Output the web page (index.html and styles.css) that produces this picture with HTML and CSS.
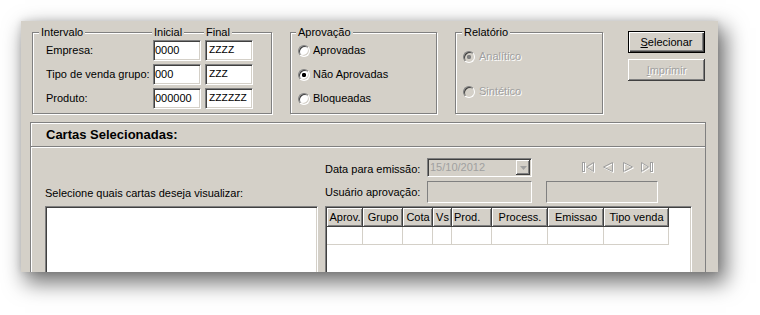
FILE: index.html
```html
<!DOCTYPE html>
<html lang="pt-BR">
<head>
<meta charset="utf-8">
<title>Cartas Selecionadas</title>
<link rel="stylesheet" href="styles.css">
</head>
<body>
<div class="stage">
<div class="frame">
<div class="win">
  <div class="top">
    <div class="group g-int">
      <div class="iv-grid">
        <span class="cap cap-int">Intervalo</span>
        <span class="cap cap-col">Inicial</span>
        <span class="cap cap-col">Final</span>

        <span class="rlabel">Empresa:</span>
        <span class="edit">0000</span>
        <span class="edit mono">ZZZZ</span>

        <span class="rlabel">Tipo de venda grupo:</span>
        <span class="edit">000</span>
        <span class="edit mono">ZZZ</span>

        <span class="rlabel">Produto:</span>
        <span class="edit">000000</span>
        <span class="edit mono">ZZZZZZ</span>
      </div>
    </div>

    <div class="group g-apr">
      <div class="gtitle"><span class="cap cap-apr">Aprovação</span></div>
      <div class="opts">
        <div class="opt"><span class="radio"></span>Aprovadas</div>
        <div class="opt"><span class="radio on"></span>Não Aprovadas</div>
        <div class="opt"><span class="radio"></span>Bloqueadas</div>
      </div>
    </div>

    <div class="group g-rel">
      <div class="gtitle"><span class="cap cap-rel">Relatório</span></div>
      <div class="opts opts-rel">
        <div class="opt dis"><span class="radio on"></span>Analítico</div>
        <div class="opt dis"><span class="radio"></span>Sintético</div>
      </div>
    </div>

    <div class="btns">
      <div class="btn btn-default"><span><u>S</u>elecionar</span></div>
      <div class="btn btn-dis"><span><u>I</u>mprimir</span></div>
    </div>
  </div>

  <div class="panel">
    <div class="panel-head">Cartas Selecionadas:</div>
    <div class="panel-body">
      <div class="col-left">
        <div class="lbl">Selecione quais cartas deseja visualizar:</div>
        <div class="listbox"></div>
      </div>
      <div class="col-right">
        <div class="frow frow1">
          <span class="flabel flabel1">Data para emissão:</span>
          <div class="combo">
            <span class="combo-text">15/10/2012</span>
            <span class="combo-btn">
              <svg width="7" height="4" viewBox="0 0 7 4"><polygon points="0,0 7,0 3.5,4" fill="#a0a0a0"/></svg>
            </span>
          </div>
          <svg class="nav" width="74" height="13" viewBox="0 0 74 13">
            <g fill="none" stroke="#ffffff" stroke-width="1" transform="translate(1,1)">
              <rect x="1.5" y="1.5" width="2" height="9"/>
              <polygon points="12.5,1.5 5.5,6 12.5,10.5"/>
              <polygon points="31.5,1.5 22.5,6 31.5,10.5"/>
              <polygon points="42.5,1.5 51.5,6 42.5,10.5"/>
              <polygon points="60.5,1.5 67.5,6 60.5,10.5"/>
              <rect x="69.5" y="1.5" width="2" height="9"/>
            </g>
            <g fill="none" stroke="#a0a0a0" stroke-width="1">
              <rect x="1.5" y="1.5" width="2" height="9"/>
              <polygon points="12.5,1.5 5.5,6 12.5,10.5"/>
              <polygon points="31.5,1.5 22.5,6 31.5,10.5"/>
              <polygon points="42.5,1.5 51.5,6 42.5,10.5"/>
              <polygon points="60.5,1.5 67.5,6 60.5,10.5"/>
              <rect x="69.5" y="1.5" width="2" height="9"/>
            </g>
          </svg>
        </div>
        <div class="frow frow2">
          <span class="flabel">Usuário aprovação:</span>
          <div class="field field-a"></div>
          <div class="field field-b"></div>
        </div>
        <div class="grid">
          <div class="grow ghead">
            <span class="hc">Aprov.</span>
            <span class="hc">Grupo</span>
            <span class="hc">Cota</span>
            <span class="hc">Vs</span>
            <span class="hc hc-left">Prod.</span>
            <span class="hc">Process.</span>
            <span class="hc">Emissao</span>
            <span class="hc">Tipo venda</span>
          </div>
          <div class="grow gdata">
            <span class="dc"></span><span class="dc"></span><span class="dc"></span><span class="dc"></span>
            <span class="dc"></span><span class="dc"></span><span class="dc"></span><span class="dc"></span>
          </div>
        </div>
      </div>
    </div>
  </div>
</div>
</div>
</div>
</body>
</html>
```

FILE: styles.css
```css
html, body {
  margin: 0;
  height: 100%;
  background: #ffffff;
}

body {
  font-family: "Liberation Sans", Arial, sans-serif;
  font-size: 11px;
  line-height: 13px;
  color: #000000;
}

.stage {
  box-sizing: border-box;
  width: 760px;
  height: 315px;
  padding: 21px 0 0 21px;
  background: #ffffff;
}

.frame {
  width: 697px;
  height: 251px;
  box-shadow: 6px 9px 20px 2px rgba(0, 0, 0, 0.55), 0 0 7px rgba(0, 0, 0, 0.12);
}

.win {
  width: 697px;
  height: 251px;
  background: #d4d0c8;
  overflow: hidden;
}

/* ---------- top area ---------- */
.top {
  display: flex;
  align-items: flex-start;
  padding: 10px 0 0 11px;
}

.group {
  box-sizing: border-box;
  height: 82px;
  margin-top: 1px;
  border: 1px solid #808080;
  box-shadow: inset 1px 1px 0 #ffffff, 1px 1px 0 #ffffff;
}

.g-int {
  width: 240px;
  padding-left: 13px;
}

.g-apr {
  width: 147px;
  margin-left: 18px;
  padding-left: 7px;
}

.g-rel {
  width: 148px;
  margin-left: 18px;
  padding-left: 7px;
}

.cap {
  background: #d4d0c8;
  padding: 0 2px;
  height: 13px;
  line-height: 13px;
  white-space: nowrap;
}

.iv-grid {
  display: grid;
  grid-template-columns: 103px 48px 48px;
  grid-template-rows: 11px 21px 21px 21px;
  column-gap: 4px;
  row-gap: 3px;
  margin-top: -7px;
}

.iv-grid .cap {
  justify-self: start;
  align-self: start;
}

.cap-int { margin-left: -7px; }
.cap-col { margin-left: -1px; }

.rlabel {
  align-self: center;
  white-space: nowrap;
}

.edit {
  box-sizing: border-box;
  height: 21px;
  display: flex;
  align-items: center;
  padding-left: 1px;
  background: #ffffff;
  border: 1px solid;
  border-color: #808080 #ffffff #ffffff #808080;
  box-shadow: inset 1px 1px 0 #404040, inset -1px -1px 0 #d4d0c8;
}

.edit.mono {
  font-family: "Liberation Mono", "Courier New", monospace;
  font-size: 10.5px;
  padding-left: 3px;
}

.gtitle {
  display: flex;
  height: 11px;
  margin-top: -7px;
  margin-bottom: 3px;
}

.cap-apr { margin-left: -2px; }
.cap-rel { margin-left: -1px; }

.opts {
  display: flex;
  flex-direction: column;
  gap: 3px;
}

.opt {
  height: 21px;
  display: flex;
  align-items: center;
  gap: 3px;
  white-space: nowrap;
}

.opts-rel {
  gap: 14px;
  padding-top: 6px;
}

.opts-rel .opt {
  gap: 4px;
}

.radio {
  box-sizing: border-box;
  width: 12px;
  height: 12px;
  flex: none;
  border-radius: 50%;
  border: 1px solid;
  border-color: #808080 #ffffff #ffffff #808080;
  background: #ffffff;
  box-shadow: inset 1px 1px 0 #404040, inset -1px -1px 0 #d4d0c8;
}

.radio.on {
  background: radial-gradient(circle, #000000 0 1.9px, #ffffff 2.4px);
}

.opt.dis {
  color: #a0a0a0;
  text-shadow: 1px 1px 0 #ffffff;
}

.opt.dis .radio {
  background: #d4d0c8;
}

.opt.dis .radio.on {
  background: radial-gradient(circle, #808080 0 1.9px, #d4d0c8 2.4px);
}

.btns {
  margin-left: 25px;
  display: flex;
  flex-direction: column;
  gap: 6px;
}

.btn {
  box-sizing: border-box;
  width: 77px;
  height: 22px;
  display: flex;
  align-items: center;
  justify-content: center;
  background: #d4d0c8;
  white-space: nowrap;
}

.btn-default {
  border: 1px solid #000000;
  box-shadow: inset 1px 1px 0 #ffffff, inset -1px -1px 0 #404040, inset -2px -2px 0 #808080;
}

.btn-dis {
  color: #a0a0a0;
  text-shadow: 1px 1px 0 #ffffff;
  box-shadow: inset -1px -1px 0 #404040, inset 1px 1px 0 #ffffff, inset -2px -2px 0 #808080, inset 2px 2px 0 #d4d0c8;
}

/* ---------- lower panel ---------- */
.panel {
  box-sizing: border-box;
  width: 676px;
  height: 200px;
  margin: 8px 0 0 9px;
  border: 1px solid #808080;
  box-shadow: inset 1px 1px 0 #ffffff;
}

.panel-head {
  box-sizing: border-box;
  height: 24px;
  display: flex;
  align-items: center;
  padding-left: 15px;
  font-size: 13px;
  font-weight: bold;
  border-bottom: 1px solid #808080;
  box-shadow: 0 1px 0 #ffffff;
}

.panel-body {
  display: flex;
  align-items: flex-start;
  gap: 7px;
  padding-left: 14px;
}

.col-left {
  width: 273px;
  padding-top: 40px;
}

.lbl {
  white-space: nowrap;
}

.listbox {
  box-sizing: border-box;
  height: 90px;
  margin-top: 6px;
  background: #ffffff;
  border: 1px solid;
  border-color: #808080 #ffffff #ffffff #808080;
  box-shadow: inset 1px 1px 0 #404040, inset -1px -1px 0 #d4d0c8;
}

.col-right {
  width: 367px;
  padding-top: 11px;
}

.frow {
  display: flex;
  align-items: center;
}

.frow1 { height: 19px; }

.frow2 {
  height: 22px;
  margin-top: 4px;
}

.flabel {
  width: 102px;
  flex: none;
  white-space: nowrap;
}

.flabel1 { margin-top: 3px; }

.combo {
  box-sizing: border-box;
  width: 105px;
  height: 19px;
  display: flex;
  align-items: center;
  padding-left: 2px;
  background: #d4d0c8;
  border: 1px solid;
  border-color: #808080 #ffffff #ffffff #808080;
  box-shadow: inset 1px 1px 0 #404040, inset -1px -1px 0 #d4d0c8;
}

.combo-text {
  color: #a0a0a0;
}

.combo-btn {
  box-sizing: border-box;
  width: 14px;
  height: 15px;
  margin-left: auto;
  margin-right: 1px;
  display: flex;
  align-items: center;
  justify-content: center;
  background: #d4d0c8;
  box-shadow: inset -1px -1px 0 #404040, inset 1px 1px 0 #ffffff, inset -2px -2px 0 #808080;
}

.nav {
  margin-left: 49px;
  display: block;
}

.field {
  box-sizing: border-box;
  height: 22px;
  background: #d4d0c8;
  border: 1px solid;
  border-color: #808080 #ffffff #ffffff #808080;
}

.field-a { width: 105px; }

.field-b {
  width: 112px;
  margin-left: 14px;
}

.grid {
  box-sizing: border-box;
  height: 90px;
  margin-top: 3px;
  padding: 1px;
  background: #ffffff;
  border: 1px solid;
  border-color: #808080 #ffffff #ffffff #808080;
  box-shadow: inset 1px 1px 0 #404040, inset -1px -1px 0 #d4d0c8;
}

.grow {
  display: grid;
  grid-template-columns: 36px 40px 30px 19px 40px 56px 56px 65px;
}

.ghead { height: 19px; }

.hc {
  display: flex;
  align-items: center;
  justify-content: center;
  white-space: nowrap;
  overflow: hidden;
  background: #d4d0c8;
  box-shadow: inset -1px -1px 0 #404040, inset 1px 1px 0 #ffffff, inset -2px -2px 0 #808080;
}

.hc-left {
  justify-content: flex-start;
  padding-left: 2px;
}

.gdata { height: 18px; }

.dc {
  border-right: 1px solid #d4d0c8;
  border-bottom: 1px solid #d4d0c8;
}
```
